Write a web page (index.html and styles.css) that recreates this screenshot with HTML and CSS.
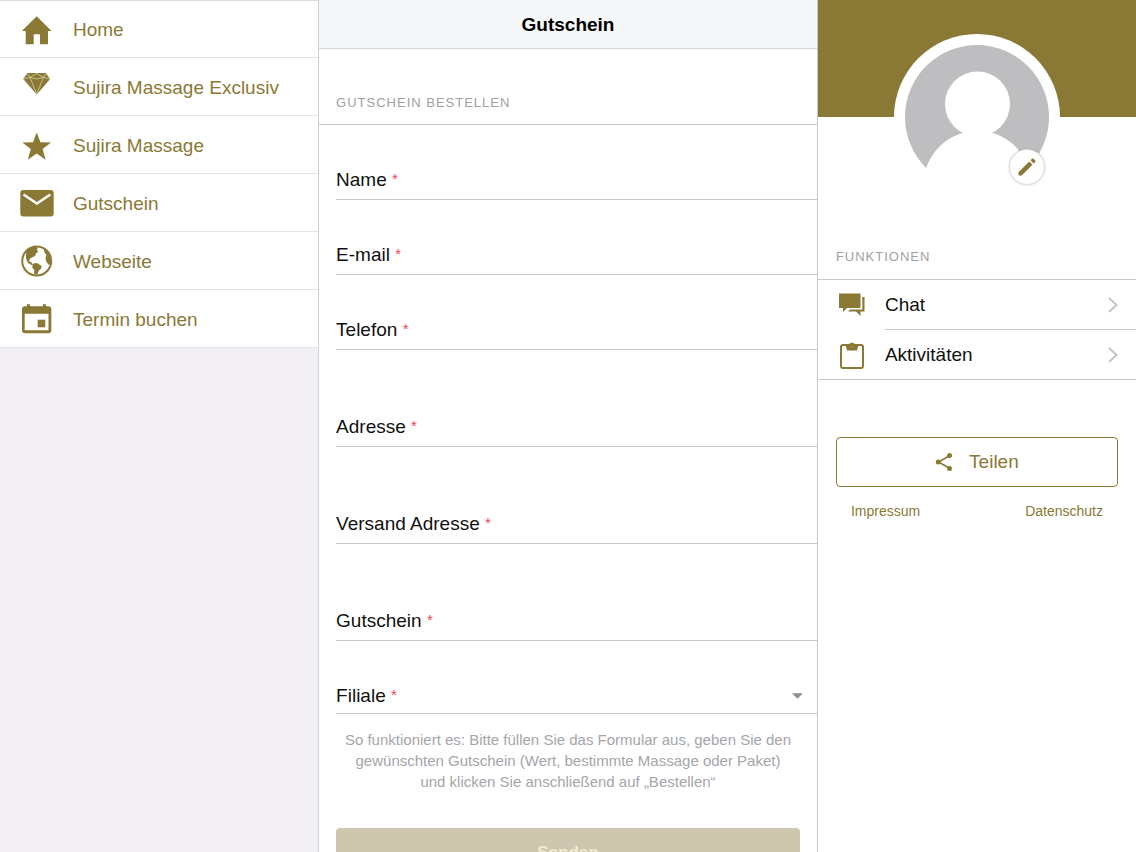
FILE: index.html
```html
<!DOCTYPE html>
<html lang="de">

<head>
    <meta charset="UTF-8">
    <meta name="viewport" content="width=device-width, initial-scale=1.0">
    <title>Gutschein</title>
    <link rel="stylesheet" href="styles.css">
</head>

<body>
    <nav class="sidebar">
        <ul class="menu">
            <li><a href="#">
                <svg class="menu-icon" viewBox="0 0 36 36"><path d="M18.7 4.3L33.5 19H30v13.3h-8v-10h-6.3v10h-8V19H3.9z"/></svg>
                Home</a></li>
            <li><a href="#">
                <svg class="menu-icon" viewBox="0 0 36 36">
                    <path d="M9.5 3h18.2l4.5 6-13.5 15.500L5.200 9z"/>
                    <path class="facet" d="M5.500 9L12 7.300l6.700 1.700 6.700-1.700L32 9M9.500 4l2.500 3.300 6.700-3.800 6.700 3.800L27.700 4M12 7.300l6.700 17 6.700-17"/>
                </svg>
                Sujira Massage Exclusiv</a></li>
            <li><a href="#">
                <svg class="menu-icon" viewBox="0 0 36 36"><path d="M18.7 4.500l3.700 9.800 10.700.3-8.500 6.500 3 10.600-8.900-6.100-8.900 6.100 3-10.600-8.500-6.500 10.700-.3z"/></svg>
                Sujira Massage</a></li>
            <li><a href="#">
                <svg class="menu-icon" viewBox="0 0 36 36">
                    <rect x="2.3" y="4" width="33.400" height="26.500" rx="3"/>
                    <path class="flap" d="M5.500 8.500l13.400 9 13.400-9"/>
                </svg>
                Gutschein</a></li>
            <li><a href="#">
                <svg class="menu-icon" viewBox="0 0 36 36">
                    <circle class="ring" cx="18.700" cy="17" r="14.500"/>
                    <path d="M8 8.500l4-4.500 6-1.500 1.500 1.500-.5 2.500 1.500 1-2.500 2-1 2.500-2 1-3 1.500-1 2.500 2.500 1.500 1.500 2.500-1 .3-4-2.300-2-4.500z"/>
                    <path d="M15 19.500l4-.5 4.700 3-.7 2.700-2.300 2-1.500 4-3-.7V26l-2-2.500z"/>
                    <path d="M25.500 4.500l4 3 3 6.500v5.500l-1.700 1.500-2.300-3-1-3.500.8-3.500-2-3z"/>
                </svg>
                Webseite</a></li>
            <li><a href="#">
                <svg class="menu-icon" viewBox="0 0 36 36">
                    <path fill-rule="evenodd" d="M9 2.300h3v2h13v-2h3v2h2.300a3 3 0 0 1 3 3v21a3 3 0 0 1-3 3H7a3 3 0 0 1-3-3v-21a3 3 0 0 1 3-3h2zM6.700 11.700v16.500h23.800V11.700z"/>
                    <path d="M19.700 17.700h7.600v7.600h-7.600z"/>
                </svg>
                Termin buchen</a></li>
        </ul>
    </nav>

    <main class="content">
        <header class="topbar">
            <h1>Gutschein</h1>
        </header>
        <h2 class="section-title">Gutschein bestellen</h2>
        <form class="order-form">
            <div class="field">
                <label for="name">Name <span class="required">*</span></label>
                <input type="text" id="name" required>
            </div>
            <div class="field">
                <label for="email">E-mail <span class="required">*</span></label>
                <input type="email" id="email" required>
            </div>
            <div class="field">
                <label for="phone">Telefon <span class="required">*</span></label>
                <input type="tel" id="phone" required>
            </div>
            <div class="field field-large">
                <label for="address">Adresse <span class="required">*</span></label>
                <textarea id="address" rows="1" required></textarea>
            </div>
            <div class="field field-large">
                <label for="shipping">Versand Adresse <span class="required">*</span></label>
                <textarea id="shipping" rows="1" required></textarea>
            </div>
            <div class="field field-large">
                <label for="voucher">Gutschein <span class="required">*</span></label>
                <textarea id="voucher" rows="1" required></textarea>
            </div>
            <div class="field field-select">
                <label for="branch">Filiale <span class="required">*</span></label>
                <select id="branch" required>
                    <option value=""></option>
                </select>
                <svg class="caret" viewBox="0 0 10 5"><path d="M0 0h10L5 5z"/></svg>
            </div>
            <p class="hint">So funktioniert es: Bitte füllen Sie das Formular aus, geben Sie den<br>
                gewünschten Gutschein (Wert, bestimmte Massage oder Paket)<br>
                und klicken Sie anschließend auf „Bestellen“</p>
            <button type="submit" class="submit">Senden</button>
        </form>
    </main>

    <aside class="profile">
        <div class="cover"></div>
        <div class="avatar">
            <svg class="avatar-image" viewBox="0 0 144 144">
                <circle class="avatar-back" cx="72" cy="72" r="72"/>
                <circle class="avatar-person" cx="72.500" cy="59" r="32.500"/>
                <circle class="avatar-person" cx="72.500" cy="140" r="54"/>
            </svg>
            <button type="button" class="edit" aria-label="Profil bearbeiten">
                <svg viewBox="0 0 20 20"><path d="M1.500 18.500v-3.200L12.300 4.500l3.200 3.200L4.700 18.500zM13.500 3.300l1.500-1.500q.8-.6 1.600 0l1.600 1.600q.6.800 0 1.600L16.700 6.500z"/></svg>
            </button>
        </div>

        <h2 class="section-title">Funktionen</h2>
        <ul class="functions">
            <li><a href="#">
                <svg class="function-icon" viewBox="0 0 28 28">
                    <path d="M1 2.500h21.500v14.500H9l-4 4v-4H1z"/>
                    <path d="M24.300 6h2.200v14.500h-4V25L18 20.500h-8l2-2h12.300z"/>
                </svg>
                <span class="function-name">Chat
                    <svg class="chevron" viewBox="0 0 10 16"><path d="M1 1l7.500 7L1 15"/></svg>
                </span></a></li>
            <li><a href="#">
                <svg class="function-icon" viewBox="0 0 28 28">
                    <rect class="board" x="3" y="4" width="22" height="23" rx="2"/>
                    <path fill-rule="evenodd" d="M7.500 4h3.200a3.400 3.400 0 0 1 6.600 0h3.200l-1.500 5.500H9zM14 2.800a1.300 1.300 0 1 0 0 2.600 1.300 1.300 0 1 0 0-2.600z"/>
                </svg>
                <span class="function-name">Aktivitäten
                    <svg class="chevron" viewBox="0 0 10 16"><path d="M1 1l7.500 7L1 15"/></svg>
                </span></a></li>
        </ul>

        <button type="button" class="share">
            <svg viewBox="0 0 18 20">
                <path class="share-lines" d="M15 3.500L3.500 10 15 16.500"/>
                <circle cx="14.500" cy="3.500" r="2.500"/>
                <circle cx="3.300" cy="10" r="2.500"/>
                <circle cx="14.500" cy="16.500" r="2.500"/>
            </svg>
            Teilen
        </button>
        <div class="legal">
            <a href="#">Impressum</a>
            <a href="#">Datenschutz</a>
        </div>
    </aside>
</body>

</html>
```

FILE: styles.css
```css
* {
    box-sizing: border-box;
}

body {
    margin: 0;
    height: 100vh;
    display: grid;
    grid-template-columns: 28% 44% 28%;
    font-family: "Liberation Sans", Arial, sans-serif;
    font-size: 19px;
    color: #111;
    background-color: #fff;
}

ul {
    list-style: none;
    margin: 0;
    padding: 0;
}

a {
    color: #8a7935;
    text-decoration: none;
}

svg {
    display: block;
    flex: none;
    fill: #8a7935;
}

button,
input,
textarea,
select {
    font-family: inherit;
    font-size: inherit;
}

/* left menu */
.sidebar {
    background-color: #f2f0f4;
}

.menu a {
    display: flex;
    align-items: center;
    gap: 19px;
    height: 58px;
    padding-top: 2px;
    padding-left: 18px;
    background-color: #fff;
    border-bottom: 1px solid #e3e4e7;
}

.menu li:first-child a {
    border-top: 1px solid #dcdcde;
}

.menu-icon {
    width: 36px;
    height: 36px;
}

.facet {
    fill: none;
    stroke: #d5cda6;
    stroke-width: 0.8;
}

.flap {
    fill: none;
    stroke: #fff;
    stroke-width: 2.6;
}

.ring {
    fill: none;
    stroke: #8a7935;
    stroke-width: 2;
}

/* order form */
.content {
    min-height: 0;
    overflow-y: auto;
    scrollbar-width: none;
    border-left: 1px solid #d2d2d5;
    border-right: 1px solid #c8c8cc;
}

.topbar {
    height: 49px;
    display: flex;
    align-items: center;
    justify-content: center;
    padding-top: 2px;
    background-color: #f6f7f9;
    border-bottom: 1px solid #d6d8da;
}

.topbar h1 {
    margin: 0;
    font-size: 19px;
    color: #000;
}

.section-title {
    margin: 0;
    padding: 46px 17px 13px;
    font-size: 13px;
    line-height: 16px;
    font-weight: normal;
    letter-spacing: 1px;
    text-transform: uppercase;
    color: #a0a0a5;
    border-bottom: 1px solid #c8c8cc;
}

.order-form {
    padding-left: 17px;
}

.field {
    display: flex;
    align-items: flex-end;
    gap: 8px;
    height: 75px;
    padding-bottom: 8px;
    border-bottom: 1px solid #c8c8cc;
}

.field-large {
    height: 97px;
}

.field-select {
    height: 73px;
    padding-right: 14px;
    padding-bottom: 6px;
}

.field label {
    line-height: 22px;
}

.required {
    color: #f0455a;
    font-size: 15px;
    line-height: 15px;
    vertical-align: 2px;
}

.field input,
.field textarea,
.field select {
    flex: 1;
    min-width: 0;
    height: 22px;
    padding: 0;
    border: none;
    outline: none;
    resize: none;
    appearance: none;
    background: transparent;
}

.caret {
    width: 11px;
    height: 22px;
    fill: #8e8e93;
}

.hint {
    margin: 15px 17px 36px 0;
    font-size: 15px;
    line-height: 21px;
    text-align: center;
    white-space: nowrap;
    color: #a5a5aa;
}

.submit {
    display: block;
    width: calc(100% - 17px);
    height: 50px;
    border: none;
    border-radius: 4px;
    font-size: 17px;
    font-weight: bold;
    color: #f3ead0;
    background-color: #cfc6af;
}

/* profile */
.cover {
    height: 117px;
    background-color: #8a7935;
}

.avatar {
    position: relative;
    width: 166px;
    height: 166px;
    margin: -83px auto 0;
    padding: 11px;
    border-radius: 50%;
    background-color: #fff;
}

.avatar-back {
    fill: #bebec0;
}

.avatar-person {
    fill: #fff;
}

.edit {
    position: absolute;
    right: 15px;
    bottom: 15px;
    display: flex;
    align-items: center;
    justify-content: center;
    width: 36px;
    height: 36px;
    padding: 0;
    border: 1px solid #dedee0;
    border-radius: 50%;
    background-color: #fff;
    box-shadow: 0 0 2px rgba(0, 0, 0, 0.2);
}

.edit svg {
    width: 20px;
    height: 20px;
}

.profile .section-title {
    padding-top: 49px;
    padding-bottom: 14px;
    padding-left: 18px;
}

.functions {
    border-bottom: 1px solid #c8c8cc;
}

.functions a {
    display: flex;
    align-items: center;
    gap: 19px;
    padding-left: 20px;
    color: #111;
}

.function-icon {
    width: 28px;
    height: 28px;
}

.function-name {
    flex: 1;
    display: flex;
    align-items: center;
    justify-content: space-between;
    height: 50px;
    padding-right: 18px;
    border-bottom: 1px solid #c8c8cc;
}

.functions li:last-child .function-name {
    height: 49px;
    border-bottom: none;
}

.board {
    fill: none;
    stroke: #8a7935;
    stroke-width: 2;
}

.chevron {
    width: 10px;
    height: 16px;
    fill: none;
    stroke: #c4c4c8;
    stroke-width: 2;
}

.share {
    display: flex;
    align-items: center;
    justify-content: center;
    gap: 16px;
    width: calc(100% - 36px);
    height: 50px;
    margin: 57px 18px 0;
    border: 1px solid #8a7935;
    border-radius: 4px;
    color: #8a7935;
    background-color: #fff;
}

.share svg {
    width: 18px;
    height: 20px;
}

.share-lines {
    fill: none;
    stroke: #8a7935;
    stroke-width: 1.6;
}

.legal {
    display: flex;
    justify-content: space-between;
    padding: 14px 33px;
    font-size: 14px;
    line-height: 20px;
}
```
